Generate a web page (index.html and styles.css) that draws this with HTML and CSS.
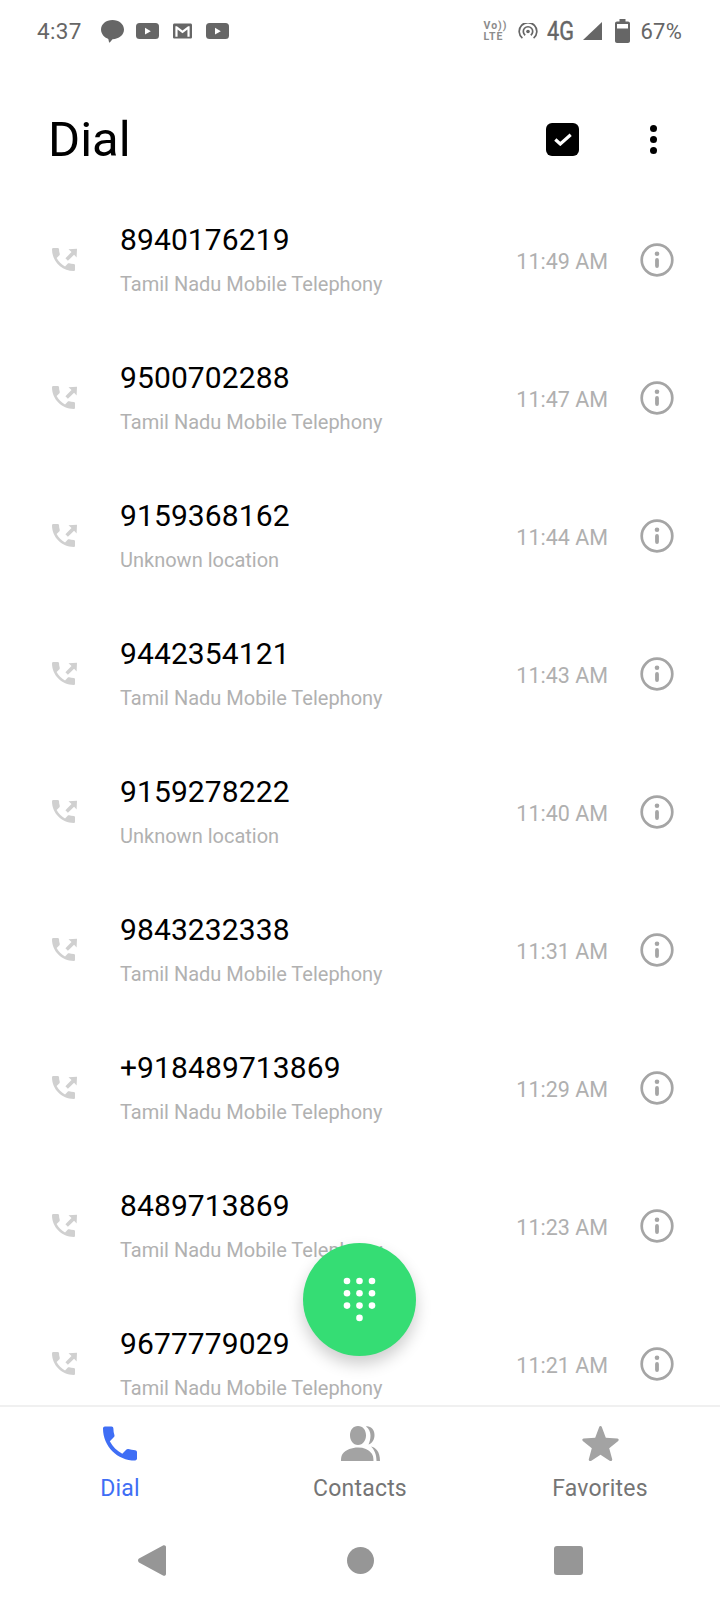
FILE: index.html
```html
<!DOCTYPE html>
<html lang="en">
<head>
  <meta charset="UTF-8" />
  <meta name="viewport" content="width=device-width, initial-scale=1.0" />
  <title>Dial</title>
  <link rel="stylesheet" href="styles.css">
</head>
<body>
  <svg class="defs" width="0" height="0">
    <symbol id="outgoing" viewBox="0 0 25 24">
      <path transform="scale(1.278) translate(-3 -3)" d="M6.620 10.790c1.440 2.830 3.760 5.140 6.590 6.590l2.200-2.200c.27-.27.67-.36 1.020-.24 1.120.37 2.330.57 3.570.57.55 0 1 .45 1 1V20c0 .55-.45 1-1 1-9.390 0-17-7.610-17-17 0-.55.45-1 1-1h3.500c.55 0 1 .45 1 1 0 1.250.2 2.450.57 3.570.11.35.03.74-.25 1.020l-2.200 2.200z"/>
      <path d="M16.500 1.200L25 .8l-.4 8.600-2.500-2.600-6.200 6-2.500-2.500 6.100-6.200z"/>
    </symbol>
    <symbol id="info" viewBox="0 0 34 34">
      <circle cx="17" cy="17" r="15.300" fill="none" stroke="currentColor" stroke-width="2.700"/>
      <circle cx="17" cy="10.800" r="2.300"/>
      <rect x="15.100" y="15" width="3.800" height="10" rx="1.900"/>
    </symbol>
    <symbol id="video" viewBox="0 0 23 16">
      <rect width="23" height="16" rx="3.500"/>
      <path d="M9 4.800v6.700l5.800-3.350z" fill="#fff"/>
    </symbol>
  </svg>

  <div class="phone">
    <div class="status">
      <span class="clock">4:37</span>
      <svg class="ic-chat" viewBox="0 0 23 23"><path d="M11.500 0C5 0 0 4.200 0 9.600c0 4.800 4 8.500 7.300 9.300l.7 3.100c.1.600.6.700 1 .2l2.500-3C18 19.200 23 15 23 9.600 23 4.200 18 0 11.500 0z"/></svg>
      <svg class="ic-video"><use href="#video"/></svg>
      <svg class="ic-mail" viewBox="0 0 20 16"><path fill-rule="evenodd" d="M1.500 0h17c.8 0 1.500.7 1.500 1.500v13c0 .8-.7 1.500-1.500 1.500h-17C.7 16 0 15.300 0 14.500v-13C0 .7.700 0 1.500 0zM2.500 3v11h2.300V6.500L10 10.300l5.200-3.800V14h2.300V3h-1.600L10 7.500 4.100 3z"/></svg>
      <svg class="ic-video"><use href="#video"/></svg>
      <span class="spacer"></span>
      <span class="volte"><span>Vo))</span><span>LTE</span></span>
      <svg class="ic-hotspot" viewBox="0 0 20 16" fill="none" stroke="currentColor" stroke-width="1.700">
        <path d="M4.400 15.200A8.800 8.800 0 1 1 15.600 15.200"/>
        <path d="M7.200 12.200A4.700 4.700 0 1 1 12.800 12.200"/>
        <circle cx="10" cy="8.500" r="1.800" fill="currentColor" stroke="none"/>
      </svg>
      <span class="net">4G</span>
      <svg class="ic-signal" viewBox="0 0 19 18"><path d="M19 0v18H0z"/></svg>
      <svg class="ic-battery" viewBox="0 0 15 24"><path fill-rule="evenodd" d="M4.500 0h6v2.500h2.500c1.100 0 2 .9 2 2V22c0 1.100-.9 2-2 2H2c-1.100 0-2-.9-2-2V4.500c0-1.100.9-2 2-2h2.500zM2 5v4.500h11V5z"/></svg>
      <span class="pct">67%</span>
    </div>

    <header class="topbar">
      <h1>Dial</h1>
      <span class="check">
        <svg viewBox="0 0 18 13" fill="none" stroke="#fff" stroke-width="3.200"><path d="M1.300 6.500l5 4.500L16.700 1.800"/></svg>
      </span>
      <span class="more"><i></i><i></i><i></i></span>
    </header>

    <main class="calls">
      <div class="call">
        <svg class="ic-out"><use href="#outgoing"/></svg>
        <div class="who"><div class="num">8940176219</div><div class="loc">Tamil Nadu Mobile Telephony</div></div>
        <span class="time">11:49 AM</span>
        <svg class="ic-info"><use href="#info"/></svg>
      </div>
      <div class="call">
        <svg class="ic-out"><use href="#outgoing"/></svg>
        <div class="who"><div class="num">9500702288</div><div class="loc">Tamil Nadu Mobile Telephony</div></div>
        <span class="time">11:47 AM</span>
        <svg class="ic-info"><use href="#info"/></svg>
      </div>
      <div class="call">
        <svg class="ic-out"><use href="#outgoing"/></svg>
        <div class="who"><div class="num">9159368162</div><div class="loc">Unknown location</div></div>
        <span class="time">11:44 AM</span>
        <svg class="ic-info"><use href="#info"/></svg>
      </div>
      <div class="call">
        <svg class="ic-out"><use href="#outgoing"/></svg>
        <div class="who"><div class="num">9442354121</div><div class="loc">Tamil Nadu Mobile Telephony</div></div>
        <span class="time">11:43 AM</span>
        <svg class="ic-info"><use href="#info"/></svg>
      </div>
      <div class="call">
        <svg class="ic-out"><use href="#outgoing"/></svg>
        <div class="who"><div class="num">9159278222</div><div class="loc">Unknown location</div></div>
        <span class="time">11:40 AM</span>
        <svg class="ic-info"><use href="#info"/></svg>
      </div>
      <div class="call">
        <svg class="ic-out"><use href="#outgoing"/></svg>
        <div class="who"><div class="num">9843232338</div><div class="loc">Tamil Nadu Mobile Telephony</div></div>
        <span class="time">11:31 AM</span>
        <svg class="ic-info"><use href="#info"/></svg>
      </div>
      <div class="call">
        <svg class="ic-out"><use href="#outgoing"/></svg>
        <div class="who"><div class="num">+918489713869</div><div class="loc">Tamil Nadu Mobile Telephony</div></div>
        <span class="time">11:29 AM</span>
        <svg class="ic-info"><use href="#info"/></svg>
      </div>
      <div class="call">
        <svg class="ic-out"><use href="#outgoing"/></svg>
        <div class="who"><div class="num">8489713869</div><div class="loc">Tamil Nadu Mobile Telephony</div></div>
        <span class="time">11:23 AM</span>
        <svg class="ic-info"><use href="#info"/></svg>
      </div>
      <div class="call">
        <svg class="ic-out"><use href="#outgoing"/></svg>
        <div class="who"><div class="num">9677779029</div><div class="loc">Tamil Nadu Mobile Telephony</div></div>
        <span class="time">11:21 AM</span>
        <svg class="ic-info"><use href="#info"/></svg>
      </div>
    </main>

    <button class="fab" aria-label="Keypad">
      <svg viewBox="0 0 33 45" fill="#fff">
        <circle cx="4" cy="4" r="3.300"/><circle cx="16.500" cy="4" r="3.300"/><circle cx="29" cy="4" r="3.300"/>
        <circle cx="4" cy="16.300" r="3.300"/><circle cx="16.500" cy="16.300" r="3.300"/><circle cx="29" cy="16.300" r="3.300"/>
        <circle cx="4" cy="28.600" r="3.300"/><circle cx="16.500" cy="28.600" r="3.300"/><circle cx="29" cy="28.600" r="3.300"/>
        <circle cx="16.500" cy="40.900" r="3.300"/>
      </svg>
    </button>

    <nav class="tabs">
      <a class="tab active">
        <svg viewBox="3 3 18 18"><path d="M6.620 10.790c1.440 2.830 3.760 5.140 6.590 6.590l2.200-2.200c.27-.27.67-.36 1.020-.24 1.120.37 2.330.57 3.570.57.55 0 1 .45 1 1V20c0 .55-.45 1-1 1-9.390 0-17-7.610-17-17 0-.55.45-1 1-1h3.500c.55 0 1 .45 1 1 0 1.250.2 2.450.57 3.570.11.35.03.74-.25 1.020l-2.200 2.200z"/></svg>
        <span>Dial</span>
      </a>
      <a class="tab">
        <svg viewBox="0 0 39 35"><path d="M17 0c5 0 8 4.200 8 9.300 0 5.200-3 9.700-8 9.700S9 14.500 9 9.300C9 4.200 12 0 17 0zM0 35c0-2.500.3-5.400 1.700-7.200C5 23.700 11 21.500 17 21.500s10.500 2 13.500 5.800c1.700 2 2 5 2 7.700z"/><path d="M25 .4c5-.5 8.500 3.400 8.500 8.600 0 4.500-2.300 8.500-6 9.600 1.200-2.500 2-5.600 2-9 0-3.500-1.600-7-4.500-9.200zM30 20.500c4.500 1 9 4.500 9 14.500h-3.500c0-6.500-2-11-5.500-14.500z"/></svg>
        <span>Contacts</span>
      </a>
      <a class="tab">
        <svg viewBox="0 0 37 35"><path d="M18.500 0c.6 0 1.100.4 1.300 1l4 10.700 11.600.7c1.300.1 1.800 1.700.8 2.500l-9 7.400 3 11c.3 1.300-1.100 2.300-2.200 1.600l-9.500-6.200-9.500 6.200c-1.100.7-2.500-.3-2.200-1.600l3-11-9-7.400c-1-.8-.5-2.400.8-2.500l11.600-.7 4-10.700c.2-.6.700-1 1.300-1z"/></svg>
        <span>Favorites</span>
      </a>
    </nav>

    <div class="navbar">
      <svg class="nav-back" viewBox="0 0 28 31"><path d="M25 .6c1.300-.9 3-.1 3 1.500v26.800c0 1.600-1.700 2.400-3 1.500L1 17.400c-1.300-.9-1.300-2.900 0-3.800z"/></svg>
      <span class="nav-home"></span>
      <span class="nav-recent"></span>
    </div>
  </div>
</body>
</html>
```
FILE: styles.css
```css
* {
  box-sizing: border-box;
}
html, body {
  margin: 0;
  padding: 0;
}
body {
  font-family: Roboto, "Noto Sans", sans-serif;
  background-color: #fff;
  color: #000;
}
.defs {
  position: absolute;
}
.phone {
  position: relative;
  width: 720px;
  height: 1600px;
  display: flex;
  flex-direction: column;
  overflow: hidden;
}

/* status bar */
.status {
  height: 62px;
  flex: none;
  display: flex;
  align-items: center;
  padding: 0 38px 0 37px;
  color: #666;
  fill: #666;
  font-size: 22px;
}
.status svg {
  flex: none;
}
.clock {
  width: 64px;
  font-size: 22.5px;
  letter-spacing: 0.3px;
}
.ic-chat {
  width: 23px;
  height: 23px;
  margin-right: 12px;
}
.ic-video {
  width: 23px;
  height: 16px;
  margin-right: 14px;
}
.ic-mail {
  width: 19px;
  height: 16px;
  margin-right: 14px;
}
.ic-video:last-of-type {
  margin-right: 0;
}
.spacer {
  flex: 1;
}
.volte {
  display: flex;
  flex-direction: column;
  width: 22px;
  margin-right: 12px;
  color: #8c8c8c;
  font-size: 10.5px;
  font-weight: 700;
  line-height: 11px;
  letter-spacing: 1px;
  white-space: nowrap;
}
.ic-hotspot {
  width: 20px;
  height: 16px;
  margin-right: 9px;
}
.net {
  font-size: 25.5px;
  font-weight: 400;
  width: 36px;
  -webkit-text-stroke: 0.4px #666;
  transform: scaleX(0.85);
  transform-origin: left center;
}
.ic-signal {
  width: 19px;
  height: 18px;
  margin-right: 13px;
}
.ic-battery {
  width: 15px;
  height: 24px;
  margin-right: 11px;
}
.pct {
  letter-spacing: 0.2px;
}

/* title row */
.topbar {
  height: 129px;
  flex: none;
  display: flex;
  align-items: center;
  padding: 25px 0 0 48px;
}
.topbar h1 {
  flex: 1;
  margin: 0;
  font-size: 49px;
  font-weight: 400;
}
.check {
  width: 33px;
  height: 33px;
  background-color: #000;
  border-radius: 6px;
  display: flex;
  align-items: center;
  justify-content: center;
}
.check svg {
  width: 18px;
  height: 13px;
}
.more {
  width: 7px;
  margin: 0 63px 0 71px;
  display: flex;
  flex-direction: column;
  gap: 4px;
}
.more i {
  display: block;
  width: 7px;
  height: 7px;
  border-radius: 50%;
  background-color: #000;
}

/* call log */
.calls {
  flex: 1;
  min-height: 0;
  overflow: hidden;
}
.call {
  height: 138px;
  display: flex;
  align-items: center;
  padding: 0 46px 0 52px;
}
.ic-out {
  width: 25px;
  height: 24px;
  fill: #d0d0d0;
  flex: none;
}
.who {
  flex: 1;
  margin-left: 43px;
  padding-bottom: 2px;
}
.num {
  font-size: 30px;
  line-height: 36px;
  letter-spacing: 0.1px;
}
.loc {
  margin-top: 14px;
  font-size: 20px;
  line-height: 24px;
  color: #b1b1b1;
}
.time {
  margin-top: 2px;
  font-size: 21.5px;
  color: #b0b0b0;
}
.ic-info {
  width: 34px;
  height: 34px;
  margin-left: 32px;
  color: #a5a5a5;
  fill: #a5a5a5;
}

/* dial button */
.fab {
  position: absolute;
  left: 303px;
  top: 1243px;
  width: 113px;
  height: 113px;
  padding: 0;
  border: none;
  border-radius: 50%;
  background-color: #35dd74;
  box-shadow: 0 8px 16px rgba(0, 0, 0, 0.2);
  display: flex;
  align-items: center;
  justify-content: center;
}
.fab svg {
  width: 33px;
  height: 45px;
}

/* bottom tabs */
.tabs {
  height: 105px;
  flex: none;
  display: flex;
  border-top: 2px solid #f0f0f0;
}
.tab {
  flex: 1;
  display: flex;
  flex-direction: column;
  align-items: center;
  padding-top: 19px;
  color: #757575;
  fill: #a3a3a3;
  font-size: 23px;
}
.tab svg {
  width: 39px;
  height: 35px;
}
.tab span {
  margin-top: 15px;
  line-height: 26px;
  letter-spacing: 0.2px;
}
.tab.active {
  color: #3f6ef5;
  fill: #3f6ef5;
}
.tab.active svg {
  width: 34px;
}

/* system nav */
.navbar {
  height: 90px;
  flex: none;
  display: flex;
  align-items: center;
  padding-top: 10px;
  fill: #969696;
}
.nav-back {
  width: 28px;
  height: 31px;
  margin-left: 138px;
}
.nav-home {
  width: 27px;
  height: 27px;
  margin-left: 181px;
  border-radius: 50%;
  background-color: #969696;
}
.nav-recent {
  width: 29px;
  height: 29px;
  margin-left: 180px;
  border-radius: 3px;
  background-color: #969696;
}
```
